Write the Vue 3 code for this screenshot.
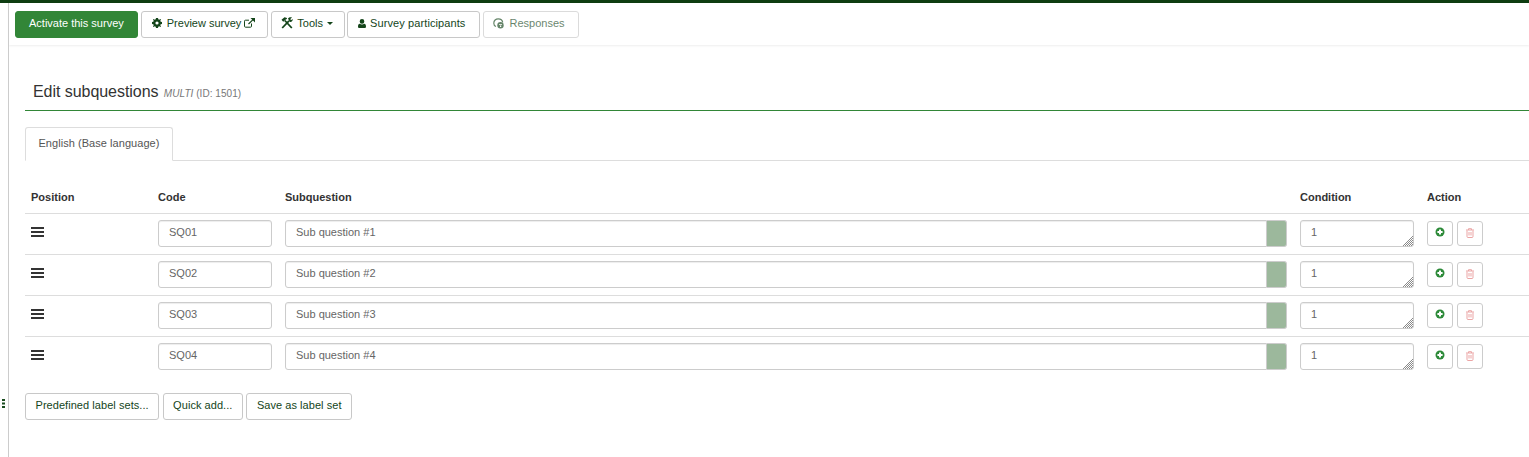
<script setup>
const rows = [
  { code: 'SQ01', text: 'Sub question #1' },
  { code: 'SQ02', text: 'Sub question #2' },
  { code: 'SQ03', text: 'Sub question #3' },
  { code: 'SQ04', text: 'Sub question #4' },
]
</script>

<template>
  <div class="page">
    <div class="topline"></div>
    <div class="shell">
      <aside class="side">
        <svg class="grip" width="3" height="9" viewBox="0 0 3 9"><path d="M0 0h3v2H0zM0 3.500h3v2H0zM0 7h3v2H0z" fill="#1b4d20"/></svg>
      </aside>
      <main class="main">
        <div class="toolbar">
          <button class="btn primary">Activate this survey</button>
          <button class="btn preview">
            <svg class="ic" width="10" height="10" viewBox="0 0 10 10"><path fill="#14451a" fill-rule="evenodd" d="M4 0h2l.3 1.300.9.400L8.400 1 9 1.600 8.300 2.800l.4.9L10 4v2l-1.300.3-.4.900L9 8.400 8.400 9l-1.200-.7-.9.4L6 10H4l-.3-1.300-.9-.4L1.600 9 1 8.400l.7-1.200-.4-.9L0 6V4l1.300-.3.400-.9L1 1.600 1.600 1l1.200.7.9-.4zM5 3.400a1.600 1.600 0 1 0 0 3.200 1.600 1.600 0 0 0 0-3.200z"/></svg>
            Preview survey
            <svg class="ic ext" width="11" height="10" viewBox="0 0 11 10"><path fill="none" stroke="#14451a" stroke-width="1" d="M7.500 5.500v2.700a1 1 0 0 1-1 1H1.500a1 1 0 0 1-1-1v-5a1 1 0 0 1 1-1H5"/><path fill="none" stroke="#14451a" stroke-width="1.200" d="M4.500 6L9.800 .9"/><path fill="#14451a" d="M6.500 0H11v4.500z"/></svg>
          </button>
          <button class="btn tools">
            <svg class="ic" width="12" height="12" viewBox="0 0 12 12"><path fill="none" stroke="#14451a" stroke-width="1.800" d="M1.200 11L8 3.800M10.800 11L3.800 3.500"/><path fill="#14451a" d="M0.500 2.800L3.500 .3 6 1 5.800 2 4.800 2.500 2.200 4.800zM7 1.600C8 .3 9.500 0 11 .5L9.300 2 10 3.300 11.700 2C12 3.600 10.800 5.300 8.800 5z"/></svg>
            Tools
            <span class="caret"></span>
          </button>
          <button class="btn people">
            <svg class="ic" width="8" height="9" viewBox="0 0 8 9"><path fill="#14451a" d="M4 0a2.300 2.300 0 0 1 2.300 2.400A2.300 2.300 0 0 1 4 4.800a2.300 2.300 0 0 1-2.300-2.400A2.300 2.300 0 0 1 4 0zM1.800 4.700C2.400 5.200 3.100 5.500 4 5.500s1.600-.3 2.200-.8C7.400 4.800 8 5.800 8 7.500 8 8.500 7.400 9 6.600 9H1.400C.6 9 0 8.500 0 7.500c0-1.700.6-2.700 1.800-2.800z"/></svg>
            Survey participants
          </button>
          <button class="btn muted">
            <svg class="ic" width="12" height="11" viewBox="0 0 12 11"><path fill="none" stroke="#14451a" stroke-width="1.200" d="M3 8.500C1.500 8 .8 6.800.8 5.200.8 2.500 2.800.8 5.200.8c2.300 0 4.200 1.500 4.500 3.600"/><circle cx="7.500" cy="7.300" r="3.200" fill="#14451a"/><path fill="#fff" d="M6 6h3v.8H6zM7 7.500h1.200V9H7z"/></svg>
            Responses
          </button>
        </div>

        <section class="content">
          <h3 class="title">Edit subquestions <small><i>MULTI</i> (ID: 1501)</small></h3>

          <div class="tabs">
            <div class="tab">English (Base language)</div>
          </div>

          <table class="grid">
            <colgroup>
              <col class="c1" /><col class="c2" /><col /><col class="c4" /><col class="c5" />
            </colgroup>
            <thead>
              <tr>
                <th>Position</th><th>Code</th><th>Subquestion</th><th>Condition</th><th>Action</th>
              </tr>
            </thead>
            <tbody>
              <tr v-for="r in rows" :key="r.code">
                <td>
                  <span class="bars"><i></i><i></i><i></i></span>
                </td>
                <td><input class="field code" :value="r.code" /></td>
                <td>
                  <div class="group">
                    <input class="field sub" :value="r.text" />
                    <span class="addon"></span>
                  </div>
                </td>
                <td>
                  <div class="cond-wrap">
                    <textarea class="field cond" rows="1">1</textarea>
                    <svg class="hatch" width="10" height="10" viewBox="0 0 10 10"><path stroke="#8a8a8a" stroke-width="1" d="M0 10L10 0M2 10L10 2M4 10L10 4M6 10L10 6M8 10L10 8"/></svg>
                  </div>
                </td>
                <td>
                  <div class="actions">
                    <button class="act">
                      <svg width="10" height="10" viewBox="0 0 10 10"><circle cx="5" cy="5" r="4.500" fill="#2c8a38"/><path d="M4 2.400h2V4h1.600v2H6v1.600H4V6H2.400V4H4z" fill="#fff"/></svg>
                    </button>
                    <button class="act del">
                      <svg width="8" height="10" viewBox="0 0 8 10"><path fill="none" stroke="#eba5a5" stroke-width="1" d="M1 2.500v6a1 1 0 0 0 1 1h4a1 1 0 0 0 1-1v-6M0 2h8M2.500 2V.700h3V2M3 4v3.500M5 4v3.500"/></svg>
                    </button>
                  </div>
                </td>
              </tr>
            </tbody>
          </table>

          <div class="footer-btns">
            <button class="btn">Predefined label sets...</button>
            <button class="btn">Quick add...</button>
            <button class="btn">Save as label set</button>
          </div>
        </section>
      </main>
    </div>
  </div>
</template>

<style>
html, body { margin: 0; background: #fff; overflow: hidden; }
</style>

<style scoped>
.page {
  height: 457px;
  font-family: "Liberation Sans", Arial, sans-serif;
  font-size: 11px;
  color: #14451a;
  overflow: hidden;
}
.topline { height: 3px; background: #0e3d11; }
.shell { display: flex; height: 454px; }
.side {
  position: relative;
  box-sizing: border-box;
  width: 9px;
  flex: none;
  border-right: 1px solid #ccc;
}
.grip { position: absolute; left: 2px; top: 396px; }
.main { flex: 1; min-width: 0; }
.toolbar {
  display: flex;
  gap: 3px;
  height: 42px;
  box-sizing: border-box;
  padding: 8px 0 0 6px;
  box-shadow: 0 1px 2px rgba(0, 0, 0, 0.07);
}
.btn {
  box-sizing: border-box;
  height: 27px;
  padding: 0 12.500px 3px;
  border: 1px solid #c8c8c8;
  border-radius: 3px;
  background: #fff;
  color: #14451a;
  font: inherit;
  white-space: nowrap;
  display: inline-flex;
  align-items: center;
}
.btn.primary {
  background: #328637;
  border-color: #328637;
  color: #fff;
  padding: 0 13px 3px;
}
.btn.preview { padding: 0 12px 3px 10px; }
.btn.tools { padding: 0 11px 3px 9px; }
.tools .ic { margin-right: 4px; }
.btn.people { padding: 0 14px 3px 10px; margin-left: -1px; letter-spacing: 0.1px; }
.btn.muted { padding: 0 13px 3px 9px; opacity: 0.65; }
.muted .ic { margin-right: 4px; }
.ic { flex: none; margin-right: 5px; }
.people .ic { margin-right: 4px; }
.ext { margin: 0 0 0 3px; }
.caret {
  width: 0;
  height: 0;
  margin-left: 4px;
  border-left: 3px solid transparent;
  border-right: 3px solid transparent;
  border-top: 3px solid #14451a;
}
.content { padding: 0 0 0 16px; }
.title {
  margin: 0;
  box-sizing: border-box;
  height: 66px;
  padding: 28px 0 0 8px;
  border-bottom: 1px solid #328637;
  color: #333;
  font-size: 16px;
  font-weight: 400;
  line-height: 38px;
  letter-spacing: -0.05px;
}
.title small { margin-left: 1px; font-size: 10px; color: #777; letter-spacing: 0.05px; }
.tabs {
  margin-top: 16px;
  height: 33px;
  border-bottom: 1px solid #ddd;
}
.tab {
  box-sizing: border-box;
  width: 148px;
  height: 34px;
  border: 1px solid #ddd;
  border-bottom-color: #fff;
  border-radius: 3px 3px 0 0;
  background: #fff;
  color: #555;
  text-align: center;
  line-height: 31px;
  letter-spacing: 0.05px;
}
.grid {
  width: 100%;
  table-layout: fixed;
  border-collapse: collapse;
  margin-top: 19px;
}
.c1 { width: 127px; }
.c2 { width: 127px; }
.c4 { width: 127px; }
.c5 { width: 108px; }
th {
  height: 33px;
  padding: 0 6px;
  text-align: left;
  font-weight: 700;
  color: #333;
  vertical-align: middle;
  border-bottom: 1px solid #ddd;
}
td {
  height: 40px;
  padding: 6px 6px 7px;
  box-sizing: border-box;
  vertical-align: top;
  border-bottom: 1px solid #ddd;
}
tbody tr:last-child td { border-bottom: 0; }
.bars { display: flex; flex-direction: column; gap: 2px; width: 13px; padding-top: 7px; }
.bars i { display: block; height: 2px; background: #333; }
.field {
  display: block;
  box-sizing: border-box;
  height: 27px;
  padding: 0 10px 3px;
  border: 1px solid #ccc;
  border-radius: 3px;
  background: #fff;
  color: #666;
  font: inherit;
  outline: none;
  box-shadow: inset 0 1px 1px rgba(0, 0, 0, 0.075);
}
.code { width: 114px; }
.group { display: flex; width: 1002px; }
.sub { flex: 1; min-width: 0; border-radius: 3px 0 0 3px; }
.addon {
  flex: none;
  width: 20px;
  height: 27px;
  box-sizing: border-box;
  background: #9cb89c;
  border: 1px solid #ccc;
  border-left: 0;
  border-radius: 0 3px 3px 0;
}
.cond-wrap { position: relative; width: 114px; }
.cond {
  width: 114px;
  padding: 4px 10px;
  line-height: 15px;
  resize: none;
}
.hatch { position: absolute; right: 1px; bottom: 1px; }
.actions { display: flex; gap: 4px; padding-top: 1px; }
.act {
  box-sizing: border-box;
  width: 26px;
  height: 25px;
  padding: 0 0 3px;
  border: 1px solid #ccc;
  border-radius: 3px;
  background: #fff;
  display: inline-flex;
  align-items: center;
  justify-content: center;
}
.act.del { padding-bottom: 1px; }
.footer-btns { display: flex; gap: 3.500px; margin-top: 16px; }
.footer-btns .btn { padding: 0 9.500px 3px; letter-spacing: 0.05px; }
</style>
